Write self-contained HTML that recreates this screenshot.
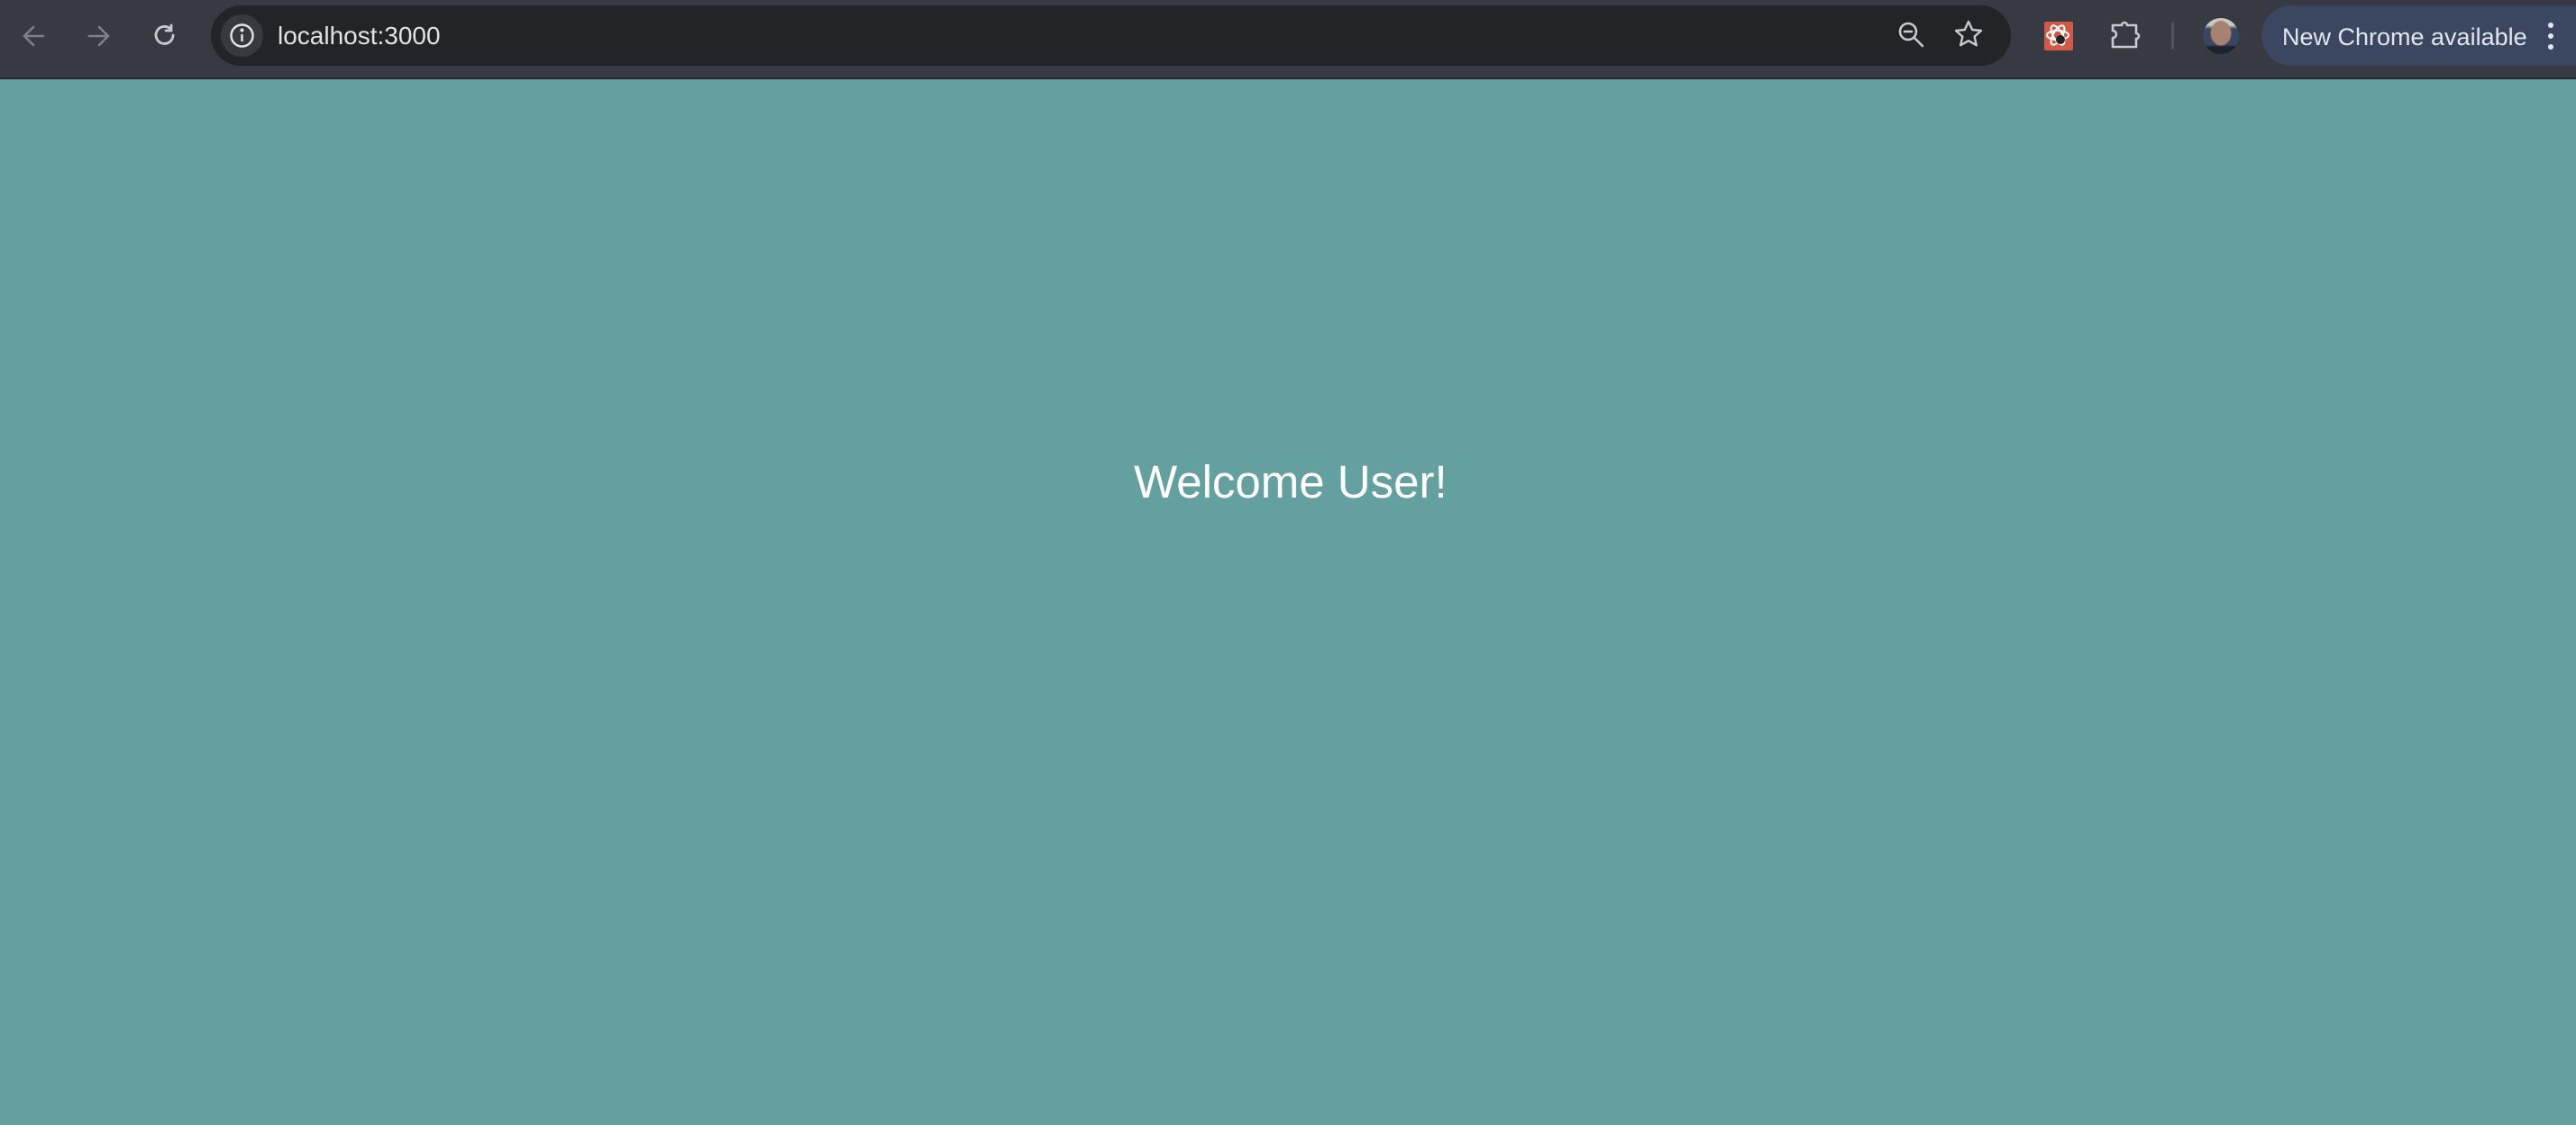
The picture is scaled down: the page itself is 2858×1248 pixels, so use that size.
<!DOCTYPE html>
<html><head><meta charset="utf-8"><style>
*{margin:0;padding:0;box-sizing:border-box}
body{width:2858px;height:1248px;overflow:hidden;background:#64a0a0;font-family:"Liberation Sans",sans-serif;position:relative}
.bar{position:absolute;left:0;top:0;width:2858px;height:88px;background:#373a42;border-bottom:2px solid #2c2e33}
.omni{position:absolute;left:234px;top:6px;width:1997px;height:67px;background:#232428;border-radius:34px}
.info{position:absolute;left:245px;top:16px;width:47px;height:47px;border-radius:50%;background:#37393e}
.url{position:absolute;left:308px;top:23px;font-size:28px;color:#e3e3e3;line-height:34px}
.pill{position:absolute;left:2509px;top:6px;width:380px;height:67px;background:#3b4760;border-radius:34px}
.pill span{position:absolute;left:23px;top:19px;font-size:27px;color:#e3e6ee;line-height:32px}
svg{position:absolute}
.welcome{position:absolute;left:1258px;top:505px;font-size:51px;color:#fff;line-height:60px;white-space:nowrap}
</style></head><body>
<div class="bar"></div>
<svg style="left:20px;top:22px" width="36" height="36" viewBox="0 0 36 36" fill="none" stroke="#7d8087" stroke-width="2.6" stroke-linecap="round"><path d="M28 18H8M17 8L7 18l10 10"/></svg>
<svg style="left:91px;top:22px" width="36" height="36" viewBox="0 0 36 36" fill="none" stroke="#7d8087" stroke-width="2.6" stroke-linecap="round"><path d="M8 18h20M19 8l10 10-10 10"/></svg>
<svg style="left:165px;top:22px" width="36" height="36" viewBox="0 0 36 36" fill="none" stroke="#c8cad0" stroke-width="2.8" stroke-linecap="round"><path d="M27 17a9.5 9.5 0 1 1-3-7"/><path d="M25 6v6h-6" /></svg>
<div class="omni"></div>
<div class="info"></div>
<svg style="left:253px;top:24px" width="31" height="31" viewBox="0 0 31 31" fill="none" stroke="#e3e3e3" stroke-width="2.4"><circle cx="15.5" cy="15.5" r="12"/><path d="M15.5 14v8"/><circle cx="15.5" cy="9.5" r="0.8" fill="#e3e3e3"/></svg>
<div class="url">localhost:3000</div>
<svg style="left:2104px;top:22px" width="34" height="34" viewBox="0 0 34 34" fill="none" stroke="#c8cad0" stroke-width="2.6" stroke-linecap="round"><circle cx="13" cy="13" r="9"/><path d="M20 20l9 9M9 13h8"/></svg>
<svg style="left:2166px;top:20px" width="36" height="36" viewBox="0 0 36 36" fill="none" stroke="#c8cad0" stroke-width="2.4" stroke-linejoin="round"><path d="M18 4l4.2 9 9.8 1-7.4 6.6 2.2 9.6L18 25.2 9.2 30.2l2.2-9.6L4 14l9.8-1z"/></svg>
<svg style="left:2268px;top:24px" width="32" height="32" viewBox="0 0 32 32"><rect width="32" height="32" rx="2" fill="#cf5a46"/><g fill="none" stroke="#fff" stroke-width="2"><ellipse cx="15" cy="15" rx="12" ry="5"/><ellipse cx="15" cy="15" rx="12" ry="5" transform="rotate(60 15 15)"/><ellipse cx="15" cy="15" rx="12" ry="5" transform="rotate(-60 15 15)"/></g><circle cx="18" cy="20" r="5" fill="#222"/></svg>
<svg style="left:2340px;top:20px" width="38" height="36" viewBox="0 0 38 36" fill="none" stroke="#c8cad0" stroke-width="2.6" stroke-linejoin="round"><path d="M4 8h10a3 3 0 0 1 6 0h10v9a3 3 0 0 1 0 6v9H4V22a4 4 0 0 0 0-8z"/></svg>
<div style="position:absolute;left:2409px;top:24px;width:3px;height:31px;background:#50535a;border-radius:2px"></div>
<div style="position:absolute;left:2444px;top:20px;width:40px;height:40px;border-radius:50%;background:radial-gradient(ellipse 30% 36% at 50% 42%,#a88270 0 90%,transparent 100%),linear-gradient(#c8c8c8 0 20%,#3b4660 30% 75%,#1c2230 80%);overflow:hidden"></div>
<div class="pill"><span>New Chrome available</span></div>
<svg style="left:2824px;top:22px" width="12" height="36" viewBox="0 0 12 36" fill="#e3e6ee"><circle cx="6" cy="6" r="3"/><circle cx="6" cy="18" r="3"/><circle cx="6" cy="30" r="3"/></svg>
<div class="welcome">Welcome User!</div>
</body></html>
